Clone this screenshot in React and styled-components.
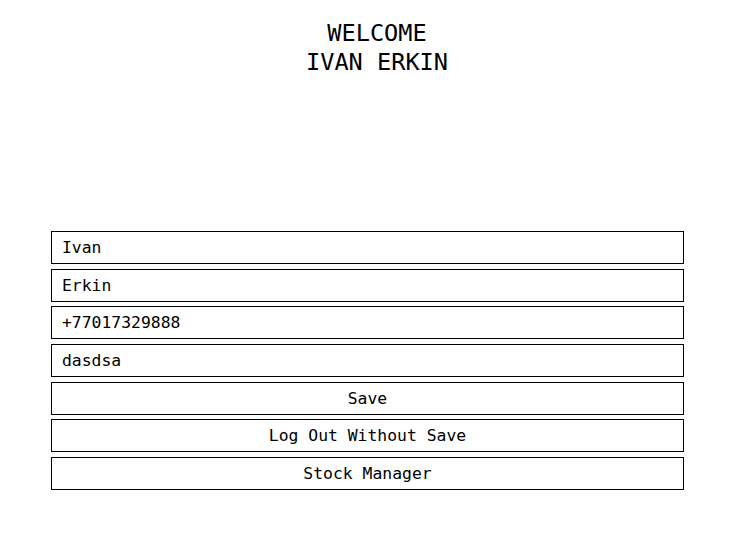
import React, { useState } from "react";
import styled, { createGlobalStyle } from "styled-components";

const GlobalStyle = createGlobalStyle`
  body {
    margin: 0;
    background: #fff;
    font-family: "DejaVu Sans Mono", "Liberation Mono", monospace;
    color: #000;
  }
`;

const Page = styled.div`
  width: 746px;
  height: 546px;
  padding-top: 19px;
  box-sizing: border-box;
`;

const Title = styled.h1`
  margin: 0;
  padding-left: 8px;
  text-align: center;
  font-size: 23.6px;
  font-weight: normal;
  line-height: 29px;
`;

const Form = styled.div`
  display: flex;
  flex-direction: column;
  gap: 4.67px;
  width: 633px;
  margin: 154px 0 0 51px;
`;

const Field = styled.input`
  box-sizing: border-box;
  height: 33px;
  margin: 0;
  padding: 0 10px;
  border: 1px solid #000;
  border-radius: 0;
  background: #fff;
  font-family: inherit;
  font-size: 16.4px;
  color: #000;
  outline: none;
`;

const Button = styled.button`
  box-sizing: border-box;
  height: 33px;
  margin: 0;
  padding: 0;
  border: 1px solid #000;
  border-radius: 0;
  background: #fff;
  font-family: inherit;
  font-size: 16.4px;
  color: #000;
  cursor: pointer;
`;

export default function App() {
  const [user, setUser] = useState({
    name: "Ivan",
    surname: "Erkin",
    phone: "+77017329888",
    address: "dasdsa",
  });
  const set = key => e => setUser(prev => ({ ...prev, [key]: e.target.value }));

  return (
    <Page>
      <GlobalStyle />
      <Title>
        WELCOME
        <br />
        {`${user.name} ${user.surname}`.toUpperCase()}
      </Title>
      <Form>
        <Field value={user.name} onChange={set("name")} />
        <Field value={user.surname} onChange={set("surname")} />
        <Field value={user.phone} onChange={set("phone")} />
        <Field value={user.address} onChange={set("address")} />
        <Button>Save</Button>
        <Button>Log Out Without Save</Button>
        <Button>Stock Manager</Button>
      </Form>
    </Page>
  );
}
